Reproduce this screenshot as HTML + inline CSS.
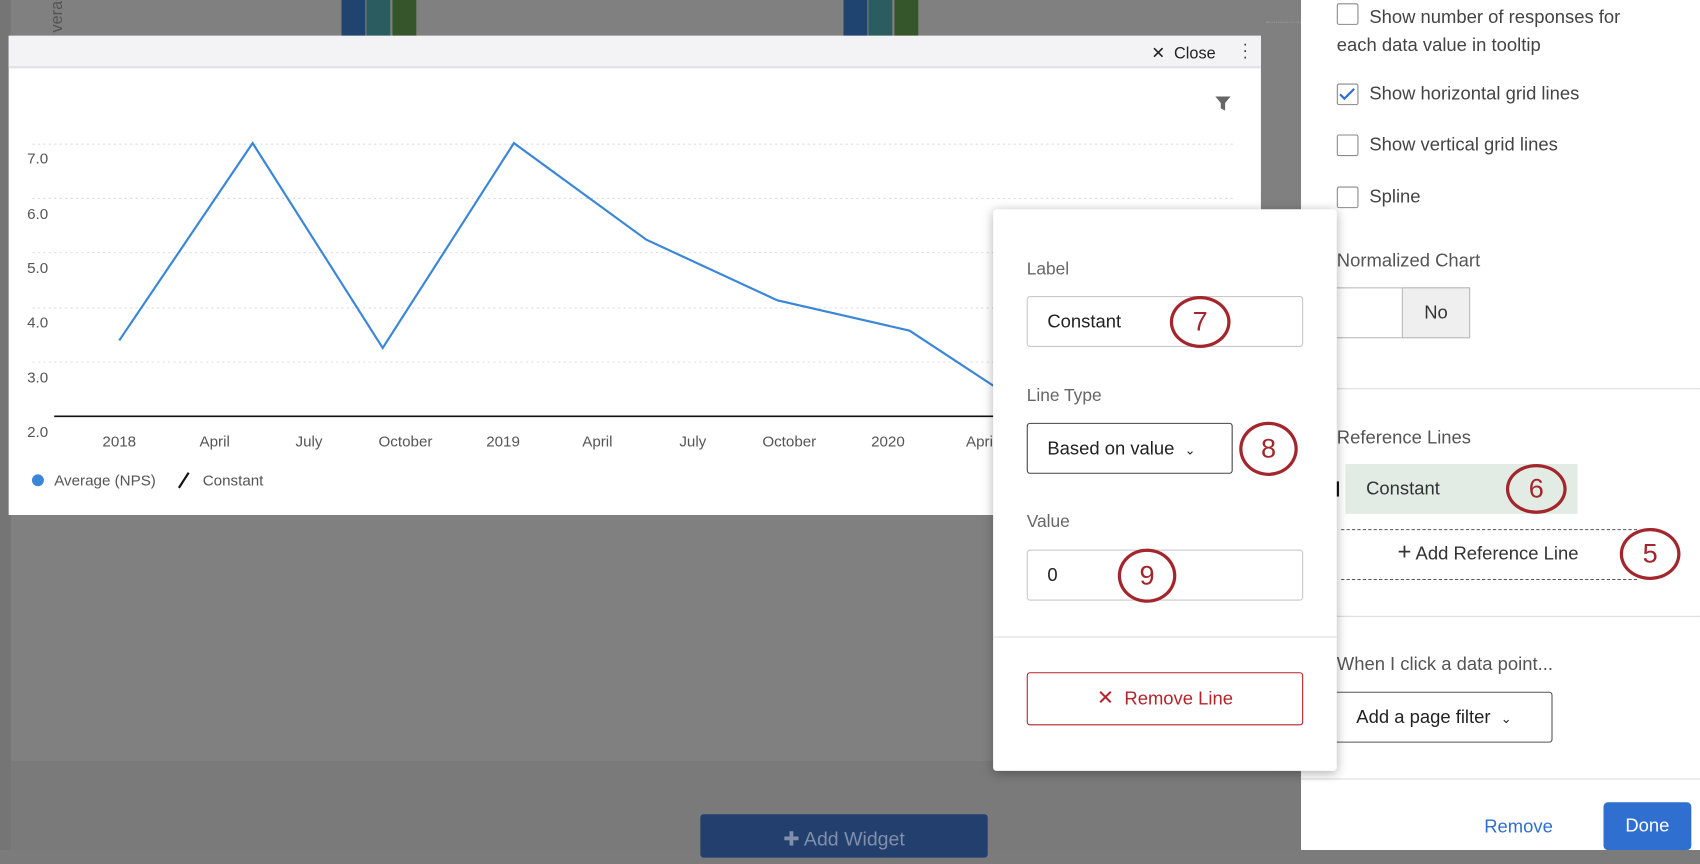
<!DOCTYPE html>
<html><head><meta charset="utf-8"><style>
*{box-sizing:border-box;margin:0;padding:0}
html,body{width:1700px;height:850px;overflow:hidden;background:#7b7b7b;font-family:"Liberation Sans",sans-serif}
#s{position:absolute;left:0;top:0;width:1568px;height:784px;transform:scale(1.08418);transform-origin:0 0}
.a{position:absolute}
.t{position:absolute;white-space:nowrap}
.cb{position:absolute;width:20px;height:20px;border:1.5px solid #8a8a8a;border-radius:2px;background:#fff}
.pt{font-size:17px;color:#444}
.circ{position:absolute;border:3.5px solid #a3262c;border-radius:50%;color:#a3262c;font-size:25px;text-align:center;background:transparent}
.lbl{font-size:16px;color:#666}
.inp{position:absolute;border:1px solid #c8c8c8;border-radius:3px;background:#fff;font-size:17px;color:#222;padding-left:18px}
</style></head><body><div id="s">
<div class="a" style="left:0;top:0;width:10px;height:784px;background:#757575"></div>
<div class="a" style="left:10px;top:0;width:1190px;height:702px;background:#808080"></div>
<div class="a" style="left:10px;top:702px;width:1190px;height:82px;background:#7a7a7a"></div>
<div class="t" style="left:44px;top:30px;font-size:15px;color:#555;transform:rotate(-90deg);transform-origin:0 0">verag</div>
<div class="a" style="left:315px;top:0;width:22px;height:33px;background:#1f4470"></div>
<div class="a" style="left:338px;top:0;width:22px;height:33px;background:#2a5c60"></div>
<div class="a" style="left:362px;top:0;width:22px;height:33px;background:#35552a"></div>
<div class="a" style="left:778px;top:0;width:22px;height:33px;background:#1f4470"></div>
<div class="a" style="left:801px;top:0;width:22px;height:33px;background:#2a5c60"></div>
<div class="a" style="left:825px;top:0;width:22px;height:33px;background:#35552a"></div>
<div class="a" style="left:1168px;top:20px;width:32px;height:0;border-top:1px dotted #999"></div>
<div class="a" style="left:646px;top:751px;width:265px;height:40px;background:#233f6e;border-radius:3px;color:#8190aa;font-size:18px;text-align:center;line-height:46px">✚ Add Widget</div>
<div class="a" style="left:8px;top:33px;width:1155px;height:442px;background:#fff">
 <div class="a" style="left:0;top:0;width:1155px;height:30px;background:#f3f3f6;border-bottom:2px solid #e2e2e6"></div>
 <div class="t" style="left:1054px;top:7px;font-size:15px;color:#222">✕&nbsp; Close</div>
 <div class="t" style="left:1138px;top:5px;font-size:15px;color:#333;line-height:6px">·<br>·<br>·</div>
 <svg class="a" style="left:1112px;top:55px" width="16" height="16" viewBox="0 0 16 16"><path d="M1 1h14l-5 6v7l-4-2V7z" fill="#666"/></svg>
</div>
<svg class="a" style="left:0;top:0" width="1200" height="480">
 <g stroke="#ddd" stroke-dasharray="2 3" stroke-width="1">
  <line x1="30" y1="133" x2="1140" y2="133"/><line x1="30" y1="183" x2="1140" y2="183"/><line x1="30" y1="233" x2="1140" y2="233"/><line x1="30" y1="284" x2="1140" y2="284"/><line x1="30" y1="334" x2="1140" y2="334"/>
 </g>
 <line x1="50" y1="384" x2="1140" y2="384" stroke="#111" stroke-width="1.5"/>
 <polyline points="110,314 233,132 353,321 474,132 596,221 717,277 839,305 915,355 960,380" fill="none" stroke="#3a86d8" stroke-width="2"/>
 <g font-family="Liberation Sans" font-size="14" fill="#555">
  <text x="25" y="151">7.0</text><text x="25" y="202">6.0</text><text x="25" y="252">5.0</text><text x="25" y="302">4.0</text><text x="25" y="353">3.0</text><text x="25" y="403">2.0</text>
  <g text-anchor="middle"><text x="110" y="412">2018</text><text x="198" y="412">April</text><text x="285" y="412">July</text><text x="374" y="412">October</text><text x="464" y="412">2019</text><text x="551" y="412">April</text><text x="639" y="412">July</text><text x="728" y="412">October</text><text x="819" y="412">2020</text><text x="905" y="412">April</text></g>
  <text x="50" y="448">Average (NPS)</text><text x="187" y="448">Constant</text>
 </g>
 <circle cx="35" cy="443" r="5.5" fill="#3a86d8"/>
 <line x1="165" y1="450" x2="174" y2="436" stroke="#111" stroke-width="2"/>
</svg>
<div class="a" style="left:1200px;top:0;width:368px;height:784px;background:#fff">
 <div class="cb" style="left:33px;top:3px"></div>
 <div class="t pt" style="left:63px;top:3px;line-height:26px">Show number of responses for<br><span style="margin-left:-30px">each data value in tooltip</span></div>
 <div class="cb" style="left:33px;top:77px;border-color:#888"><svg width="17" height="17" viewBox="0 0 17 17" style="position:absolute;left:0;top:0"><path d="M2 9l4 4 9-9" fill="none" stroke="#2f6fcf" stroke-width="2"/></svg></div>
 <div class="t pt" style="left:63px;top:77px">Show horizontal grid lines</div>
 <div class="cb" style="left:33px;top:124px"></div>
 <div class="t pt" style="left:63px;top:124px">Show vertical grid lines</div>
 <div class="cb" style="left:33px;top:172px"></div>
 <div class="t pt" style="left:63px;top:172px">Spline</div>
 <div class="t pt" style="left:33px;top:231px;color:#555">Normalized Chart</div>
 <div class="a" style="left:20px;top:265px;width:136px;height:47px;border:1px solid #bbb"></div>
 <div class="a" style="left:93px;top:265px;width:63px;height:47px;border:1px solid #bbb;background:#efefef;font-size:17px;color:#333;text-align:center;line-height:46px">No</div>
 <div class="a" style="left:0;top:358px;width:368px;border-top:1px solid #ddd"></div>
 <div class="t pt" style="left:33px;top:394px;color:#555">Reference Lines</div>
 <div class="a" style="left:30px;top:444px;width:5px;height:14px;background:#111"></div>
 <div class="a" style="left:41px;top:428px;width:214px;height:46px;background:#e2ece5;font-size:17px;color:#333;padding-left:19px;line-height:46px">Constant</div>
 <div class="circ" style="left:189px;top:428px;width:56px;height:46px;line-height:40px">6</div>
 <div class="a" style="left:37px;top:488px;width:273px;height:47px;border-top:1px dashed #555;border-bottom:1px dashed #555"></div>
 <div class="t pt" style="left:89px;top:500px;color:#333"><span style="font-size:22px;line-height:17px">+</span> Add Reference Line</div>
 <div class="circ" style="left:294px;top:487px;width:56px;height:48px;line-height:42px">5</div>
 <div class="a" style="left:0;top:568px;width:368px;border-top:1px solid #ddd"></div>
 <div class="t pt" style="left:33px;top:603px;color:#555">When I click a data point...</div>
 <div class="a" style="left:20px;top:638px;width:212px;height:47px;border:1px solid #555;border-radius:3px;font-size:17px;color:#222;padding-left:30px;line-height:46px">Add a page filter &nbsp;<span style="font-size:12px">⌄</span></div>
 <div class="a" style="left:0;top:718px;width:368px;border-top:1px solid #ddd"></div>
 <div class="t" style="left:169px;top:753px;font-size:17px;color:#2f6fcf">Remove</div>
 <div class="a" style="left:279px;top:740px;width:81px;height:44px;background:#2f6fcf;border-radius:4px;color:#fff;font-size:17px;text-align:center;line-height:44px">Done</div>
</div>
<div class="a" style="left:916px;top:193px;width:317px;height:518px;background:#fff;border-radius:3px;box-shadow:0 2px 10px rgba(0,0,0,.3)">
 <div class="t lbl" style="left:31px;top:47px">Label</div>
 <div class="inp" style="left:31px;top:80px;width:255px;height:47px;line-height:45px">Constant</div>
 <div class="circ" style="left:163px;top:80px;width:56px;height:48px;line-height:42px">7</div>
 <div class="t lbl" style="left:31px;top:164px">Line Type</div>
 <div class="inp" style="left:31px;top:197px;width:190px;height:47px;line-height:45px;border-color:#444">Based on value &nbsp;<span style="font-size:12px">⌄</span></div>
 <div class="circ" style="left:227px;top:196px;width:54px;height:50px;line-height:44px">8</div>
 <div class="t lbl" style="left:31px;top:280px">Value</div>
 <div class="inp" style="left:31px;top:314px;width:255px;height:47px;line-height:45px">0</div>
 <div class="circ" style="left:115px;top:313px;width:54px;height:50px;line-height:44px">9</div>
 <div class="a" style="left:0;top:394px;width:317px;border-top:1px solid #ddd"></div>
 <div class="a" style="left:31px;top:427px;width:255px;height:49px;border:1px solid #b5242b;border-radius:3px;color:#b5242b;font-size:17px;text-align:center;line-height:47px"><span style="font-size:19px">✕</span>&nbsp; Remove Line</div>
</div>
</div></body></html>
